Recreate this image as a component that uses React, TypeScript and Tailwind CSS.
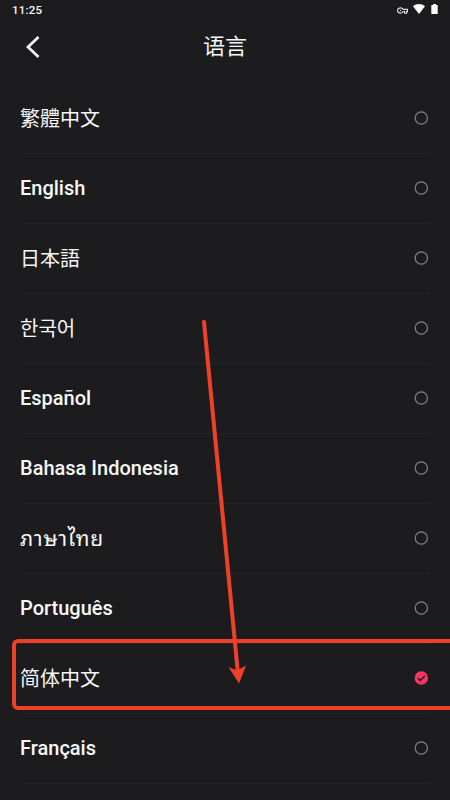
import clsx from 'clsx';

interface Language {
  code: string;
  label: string;
  font: string;
}

const latin = "text-xl font-['Roboto','Noto_Sans',sans-serif] font-medium";

const languages: Language[] = [
  { code: 'zh-TW', label: '繁體中文', font: "text-xl font-['Noto_Sans_CJK_TC',sans-serif]" },
  { code: 'en', label: 'English', font: latin },
  { code: 'ja', label: '日本語', font: "text-xl font-['Noto_Sans_CJK_JP',sans-serif]" },
  { code: 'ko', label: '한국어', font: "text-xl font-['Noto_Sans_CJK_KR',sans-serif]" },
  { code: 'es', label: 'Español', font: latin },
  { code: 'id', label: 'Bahasa Indonesia', font: latin },
  { code: 'th', label: 'ภาษาไทย', font: "pb-[3px] text-[21px] tracking-[0.8px] font-['Noto_Sans_Thai_Looped','Noto_Sans_Thai','Loma',sans-serif]" },
  { code: 'pt', label: 'Português', font: latin },
  { code: 'zh-CN', label: '简体中文', font: "text-xl font-['Noto_Sans_CJK_SC',sans-serif]" },
  { code: 'fr', label: 'Français', font: latin }
];

function StatusBar() {
  return (
    <div className="flex h-5 items-start justify-between pl-3 pr-3 font-['Roboto',sans-serif]">
      <span className="text-[11.5px] font-medium leading-5 tracking-[0.2px]">11:25</span>
      <div className="flex items-center pt-1">
        {/* VPN key */}
        <svg className="mr-[5px] mt-[2px] h-[7px] w-[11px]" viewBox="0 0 11 7" fill="none" stroke="#e0e0e0" strokeWidth="1.1">
          <path d="M6.2 2.4A3 2.6 0 1 0 6.2 4.6H7.6V6.2H9.6V4.6H10.5V2.4Z" />
          <circle cx="3.5" cy="3.5" r="0.7" fill="#e0e0e0" stroke="none" />
        </svg>
        <svg className="mr-[6px] h-[10px] w-[12px]" viewBox="0 0 12 10" fill="#fff">
          <path d="M0 2.3C3.4-.7 8.6-.7 12 2.3L6 10Z" />
        </svg>
        <svg className="h-[10px] w-[7px]" viewBox="0 0 7 10" fill="#fff">
          <path d="M2 0h3v1h1.2q.5 0 .5.5v8q0 .5-.5.5H.8q-.5 0-.5-.5v-8q0-.5.5-.5H2Z" />
        </svg>
      </div>
    </div>
  );
}

function Radio({ checked }: { checked: boolean }) {
  return (
    <svg className="h-[14px] w-[14px]" viewBox="0 0 14 14" fill="none">
      {checked ? (
        <>
          <circle cx="7.3" cy="7" r="6.7" fill="#fb3465" />
          <path d="M3.9 7.1L6.3 9.4L10.8 4.9" stroke="#1c1c1e" strokeWidth="1.4" />
        </>
      ) : (
        <circle cx="7.3" cy="7" r="6.1" stroke="#858588" strokeWidth="1.2" />
      )}
    </svg>
  );
}

export default function App() {
  const selected = 'zh-CN';

  return (
    <div className="relative h-[800px] w-[450px] overflow-hidden bg-[#1c1c1e] text-[#f7f7f7]">
      <StatusBar />

      <header className="grid h-16 grid-cols-[1fr_auto_1fr] items-start">
        <button className="ml-[25px] mt-[15px] w-4">
          <svg className="h-6 w-4" viewBox="0 0 16 24" fill="none" stroke="#f2f2f2" strokeWidth="2.8">
            <path d="M13.5 2L3 12L13.5 22" />
          </svg>
        </button>
        <h1 className="mt-2 font-['Noto_Sans_CJK_SC',sans-serif] text-[22px] leading-8">语言</h1>
      </header>

      <ul className="px-5">
        {languages.map((lang) => (
          <li key={lang.code} className="flex h-[70px] items-center justify-between border-b border-[#262628] pb-px pr-[2px]">
            <span lang={lang.code} className={clsx('leading-7', lang.font)}>
              {lang.label}
            </span>
            <Radio checked={lang.code === selected} />
          </li>
        ))}
      </ul>

      {/* Callout over the selected language */}
      <div className="absolute left-3 top-[639px] h-[71px] w-[450px] rounded-[6px] border-4 border-[#ee4128]" />
      <svg className="absolute left-[190px] top-[310px] h-[380px] w-[70px]" viewBox="190 310 70 380" fill="none">
        <path d="M204 322L238 674" stroke="#ee4128" strokeWidth="4" strokeLinecap="round" />
        <path d="M239 683.5L228.5 667L237 670.5L246 665.5Z" fill="#ee4128" />
      </svg>
    </div>
  );
}
